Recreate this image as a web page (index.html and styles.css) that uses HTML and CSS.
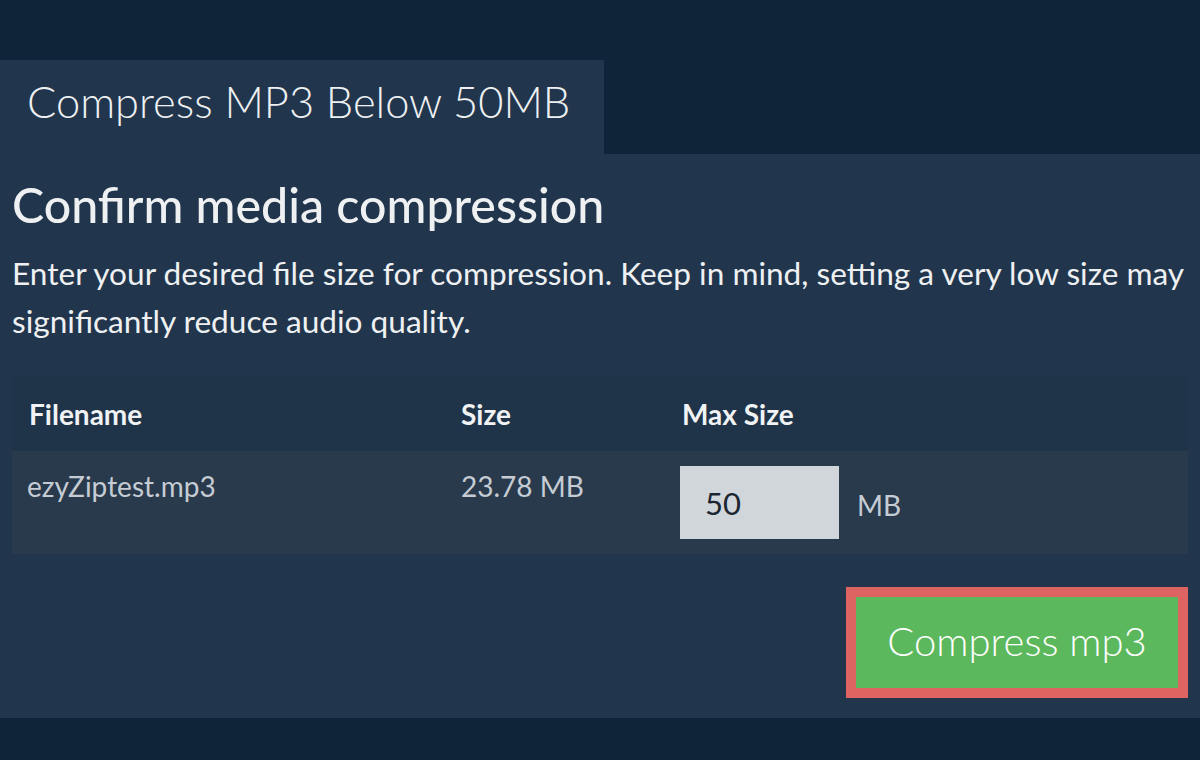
FILE: index.html
```html
<!DOCTYPE html>
<html>
<head>
<meta charset="utf-8">
<link rel="stylesheet" href="styles.css">
</head>
<body>
<div class="page">
  <div class="tabbar">
    <div class="tab">Compress MP3 Below 50MB</div>
  </div>
  <div class="panel">
    <h1 class="title">Confirm media compression</h1>
    <p class="desc">Enter your desired file size for compression. Keep in mind, setting a very low size may significantly reduce audio quality.</p>
    <table class="files">
      <thead>
        <tr>
          <th class="c1">Filename</th>
          <th class="c2">Size</th>
          <th class="c3">Max Size</th>
        </tr>
      </thead>
      <tbody>
        <tr>
          <td class="c1">ezyZiptest.mp3</td>
          <td class="c2">23.78 MB</td>
          <td class="c3"><div class="maxcell"><span class="input">50</span><span class="unit">MB</span></div></td>
        </tr>
      </tbody>
    </table>
    <div class="actions">
      <button class="btn">Compress mp3</button>
    </div>
  </div>
</div>
</body>
</html>
```

FILE: styles.css
```css
html, body {
  margin: 0;
  padding: 0;
  background: #0f2439;
  font-family: Lato, "Noto Sans", sans-serif;
}
.page {
  width: 1200px;
  height: 760px;
  padding-top: 60px;
  box-sizing: border-box;
}
.tabbar {
  display: flex;
}
.tab {
  width: 604px;
  height: 94px;
  box-sizing: border-box;
  background: #21364d;
  color: #eef0f2;
  font-weight: 300;
  font-size: 43.4px;
  padding-left: 27px;
  padding-top: 16px;
  line-height: 50px;
  white-space: nowrap;
}
.panel {
  background: #21364d;
  height: 564px;
  box-sizing: border-box;
  padding: 22px 12px 0 12px;
}
.title {
  margin: 0;
  font-size: 48.3px;
  font-weight: 500;
  color: #eef0f2;
  line-height: 56px;
}
.desc {
  margin: 17px 0 0 0;
  font-size: 31.6px;
  line-height: 48px;
  color: #eef0f2;
}
.files {
  margin-top: 31px;
  width: 100%;
  border-collapse: collapse;
}
.files th {
  background: #1f3349;
  color: #f0f2f4;
  font-size: 28px;
  font-weight: 700;
  text-align: left;
  height: 75px;
  padding: 0 17px;
  box-sizing: border-box;
}
.files td {
  background: #2a3a4d;
  color: #c5ccd4;
  font-size: 28px;
  text-align: left;
  vertical-align: top;
  height: 103px;
  padding: 18px 17px 0 17px;
  box-sizing: border-box;
}
.files td.c1 {
  padding-left: 15px;
}
.c1 { width: 432px; }
.c2 { width: 221px; }
.files td.c3 {
  padding: 15px 15px 0 15px;
}
.maxcell {
  display: flex;
  align-items: center;
  gap: 18px;
}
.input {
  display: block;
  width: 159px;
  height: 73px;
  box-sizing: border-box;
  background: #d1d6db;
  color: #1b2632;
  font-size: 31px;
  line-height: 75px;
  padding-left: 25px;
}
.unit {
  font-size: 28px;
  color: #c5ccd4;
  padding-top: 4px;
}
.actions {
  display: flex;
  justify-content: flex-end;
  margin-top: 33px;
}
.btn {
  width: 342px;
  height: 111px;
  box-sizing: border-box;
  border: 10px solid #dd6460;
  background: #5cb85c;
  color: #ffffff;
  font-family: Lato, "Noto Sans", sans-serif;
  font-weight: 300;
  font-size: 40px;
  padding: 0 0 4px 0;
  margin: 0;
}
```
